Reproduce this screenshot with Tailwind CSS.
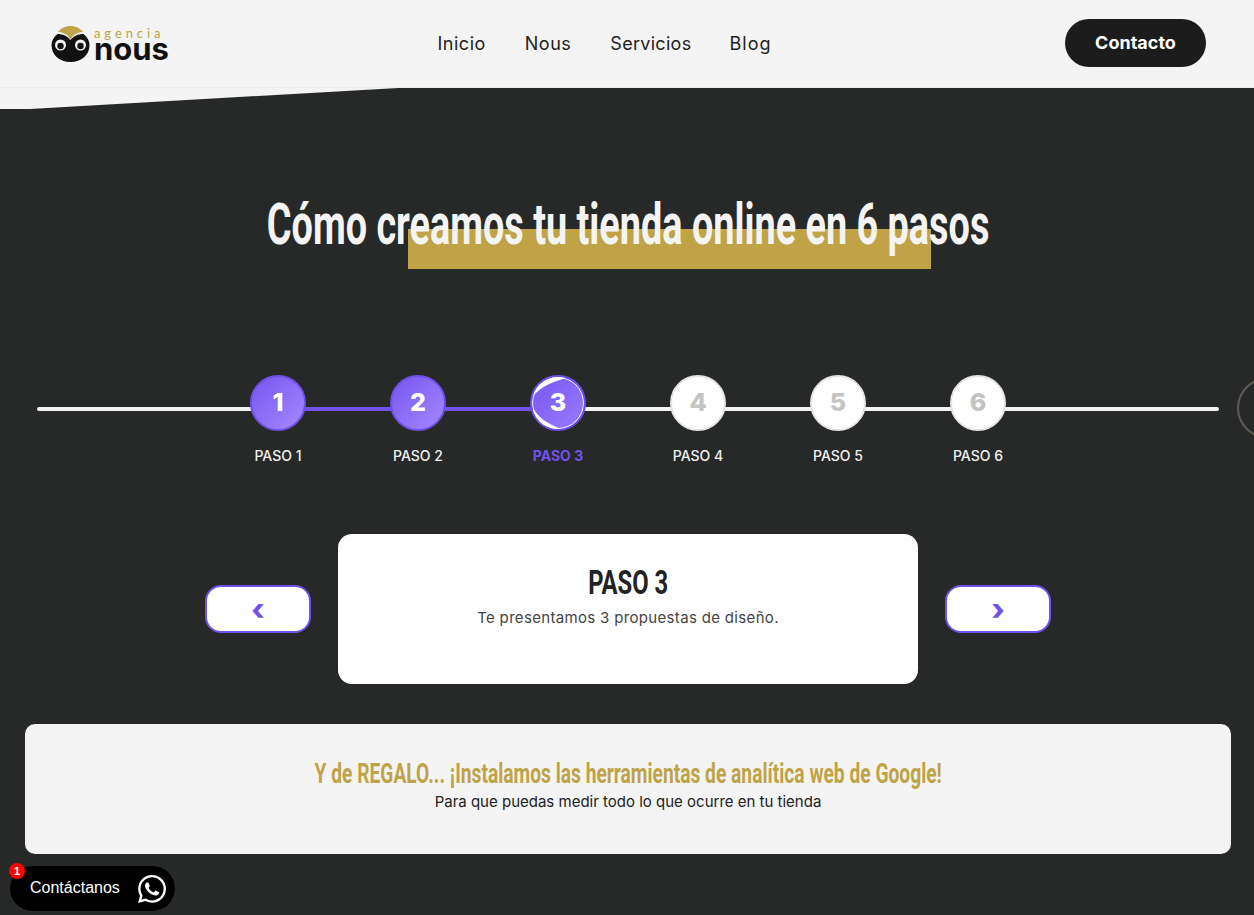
<!DOCTYPE html>
<html lang="es">
<head>
  <meta charset="UTF-8">
  <title>Agencia Nous - Tienda online</title>
  <script src="https://cdn.jsdelivr.net/npm/@tailwindcss/browser@4"></script>
</head>
<body class="bg-[#272928] h-[915px] overflow-hidden relative font-['Inter',sans-serif]">
  <!-- cabecera -->
  <header class="h-[88px] bg-[#f4f4f4] border-b border-[#ececec] flex items-center justify-between pl-[51px] pr-[48px]">
    <a class="flex items-center gap-[4px] w-[117px]">
      <svg class="shrink-0" width="39" height="36" viewBox="0 0 39 36">
        <path d="M7 6C10 2 15 0 19.500 0S29 2 32 6c-5 0-9 2-12.500 7C16 8 12 6 7 6z" fill="#bfa346"/>
        <path d="M19.500 14c3-4 8-6 13-6 4 3 6 7 6 11 0 10-8 17-19 17S.500 29 .500 19c0-4 2-8 6-11 5 0 10 2 13 6z" fill="#111"/>
        <circle cx="9.500" cy="19" r="5.500" fill="#f4f4f4"/><circle cx="29.500" cy="19" r="5.500" fill="#f4f4f4"/>
        <circle cx="9.500" cy="20" r="3.200" fill="#111"/><circle cx="29.500" cy="20" r="3.200" fill="#111"/>
      </svg>
      <div class="flex flex-col items-start">
        <span class="text-[13px] leading-[11px] text-[#bfa346] tracking-[3.9px] font-['Lato',sans-serif]">agencia</span>
        <span class="text-[31px] leading-[20px] font-bold text-[#111] font-['Inter',sans-serif]">nous</span>
      </div>
    </a>
    <nav class="flex items-center gap-[39px] text-[18px] text-[#222] tracking-[.5px] ml-[-24px]">
      <a>Inicio</a><a>Nous</a><a class="tracking-[.3px]">Servicios</a><a class="tracking-[1px] ml-[-1px]">Blog</a>
    </nav>
    <a class="w-[141px] h-[48px] mb-[2px] rounded-full bg-[#1c1c1c] text-white font-bold text-[18px] flex items-center justify-center">Contacto</a>
  </header>
  <!-- cuña clara bajo la cabecera -->
  <svg class="absolute left-0 top-[88px]" width="400" height="21"><polygon points="0,0 398,0 30,21 0,21" fill="#f4f4f4"/></svg>

  <main class="w-[1256px]">
    <h1 class="mt-[103px] h-[80px] flex justify-center relative">
      <span class="absolute top-[38px] left-[408px] w-[523px] h-[40px] bg-[#bfa346]"></span>
      <span class="relative inline-block whitespace-nowrap text-[58px] leading-[66px] font-bold text-[#f4f4f4] scale-x-[.652] font-['Roboto',sans-serif]">Cómo creamos tu tienda online en 6 pasos</span>
    </h1>

    <!-- pasos -->
    <section class="relative mt-[104px] mx-[37px] w-[1182px]">
      <div class="absolute left-0 right-0 top-[32px] h-[4px] rounded-sm bg-[#f1f1f1]"></div>
      <div class="absolute left-[241px] top-[32px] h-[4px] w-[280px] bg-[#7351ec]"></div>
      <ol class="relative flex justify-center">
        <li class="w-[140px] flex flex-col items-center">
          <div class="w-[56px] h-[56px] rounded-full border-2 border-[#6f4fe8] bg-linear-to-br from-[#7655f0] to-[#a588ff] text-white font-extrabold text-[25px] flex items-center justify-center">1</div>
          <span class="mt-[14px] text-[14px] leading-[22px] font-medium text-[#f1f1f1]">PASO 1</span>
        </li>
        <li class="w-[140px] flex flex-col items-center">
          <div class="w-[56px] h-[56px] rounded-full border-2 border-[#6f4fe8] bg-linear-to-br from-[#7655f0] to-[#a588ff] text-white font-extrabold text-[25px] flex items-center justify-center">2</div>
          <span class="mt-[14px] text-[14px] leading-[22px] font-medium text-[#f1f1f1]">PASO 2</span>
        </li>
        <li class="w-[140px] flex flex-col items-center">
          <div class="relative w-[56px] h-[56px] rounded-full border-2 border-[#6f4fe8] bg-linear-to-br from-[#7655f0] to-[#9a7cff] text-white font-extrabold text-[25px] flex items-center justify-center">
            <svg class="absolute left-0 top-0 rounded-full" width="52" height="52" viewBox="2 2 52 52"><path d="M3 21C9 14 18 8 36 3L30 -2 5 5zM3 33C8 42 16 48 31 54L25 60 3 50z" fill="#fff"/><circle cx="28" cy="28" r="25.500" fill="none" stroke="#fff" stroke-width="1"/></svg>
            <span class="relative">3</span>
          </div>
          <span class="mt-[14px] text-[14px] leading-[22px] font-bold text-[#7351ec]">PASO 3</span>
        </li>
        <li class="w-[140px] flex flex-col items-center">
          <div class="w-[56px] h-[56px] rounded-full border-2 border-[#e4e4e4] bg-white text-[#c4c4c4] font-extrabold text-[25px] flex items-center justify-center">4</div>
          <span class="mt-[14px] text-[14px] leading-[22px] font-medium text-[#f1f1f1]">PASO 4</span>
        </li>
        <li class="w-[140px] flex flex-col items-center">
          <div class="w-[56px] h-[56px] rounded-full border-2 border-[#e4e4e4] bg-white text-[#c4c4c4] font-extrabold text-[25px] flex items-center justify-center">5</div>
          <span class="mt-[14px] text-[14px] leading-[22px] font-medium text-[#f1f1f1]">PASO 5</span>
        </li>
        <li class="w-[140px] flex flex-col items-center">
          <div class="w-[56px] h-[56px] rounded-full border-2 border-[#e4e4e4] bg-white text-[#c4c4c4] font-extrabold text-[25px] flex items-center justify-center">6</div>
          <span class="mt-[14px] text-[14px] leading-[22px] font-medium text-[#f1f1f1]">PASO 6</span>
        </li>
      </ol>
    </section>

    <!-- detalle del paso -->
    <section class="mt-[67px] flex items-center justify-center gap-[27px]">
      <button class="w-[106px] h-[48px] rounded-[16px] border-2 border-[#7351ec] bg-white text-[#7351ec] font-extrabold text-[30px] leading-none pb-[1px]">‹</button>
      <div class="w-[580px] h-[150px] rounded-[14px] bg-white flex flex-col items-center pt-[28px]">
        <h2 class="text-[34px] leading-[40px] font-bold text-[#222] scale-x-[.7] font-['Roboto',sans-serif]">PASO 3</h2>
        <p class="mt-[5px] text-[15px] leading-[22px] text-[#444] tracking-[.33px]">Te presentamos 3 propuestas de diseño.</p>
      </div>
      <button class="w-[106px] h-[48px] rounded-[16px] border-2 border-[#7351ec] bg-white text-[#7351ec] font-extrabold text-[30px] leading-none pb-[1px]">›</button>
    </section>

    <section class="mt-[40px] ml-[25px] w-[1206px] h-[130px] rounded-[10px] bg-[#f4f4f4] flex flex-col items-center pt-[32px]">
      <h3 class="whitespace-nowrap text-[28px] leading-[35px] font-bold text-[#bfa346] scale-x-[.686] font-['Roboto',sans-serif]">Y de REGALO... ¡Instalamos las herramientas de analítica web de Google!</h3>
      <p class="text-[15px] leading-[22px] text-[#222]">Para que puedas medir todo lo que ocurre en tu tienda</p>
    </section>
  </main>

  <!-- círculo recortado en el borde derecho -->
  <div class="absolute left-[1237px] top-[378px] w-[60px] h-[60px] rounded-full border-2 border-[#5c5c54]"></div>

  <!-- widget whatsapp -->
  <a class="absolute left-[10px] top-[866px] w-[165px] h-[45px] rounded-full bg-black text-white flex items-center justify-between pl-[20px] pr-[9px] text-[16px] font-['Liberation_Sans',sans-serif]">
    <span class="mb-[2px]">Contáctanos</span>
    <svg width="28" height="28" viewBox="0 0 24 24" fill="#fff"><path d="M17.472 14.382c-.297-.149-1.758-.867-2.03-.967-.273-.099-.471-.148-.67.15-.197.297-.767.966-.94 1.164-.173.199-.347.223-.644.075-.297-.15-1.255-.463-2.39-1.475-.883-.788-1.48-1.761-1.653-2.059-.173-.297-.018-.458.13-.606.134-.133.298-.347.446-.52.149-.174.198-.298.298-.497.099-.198.05-.371-.025-.52-.075-.149-.669-1.612-.916-2.207-.242-.579-.487-.5-.669-.51-.173-.008-.371-.01-.57-.01-.198 0-.52.074-.792.372-.272.297-1.04 1.016-1.04 2.479 0 1.462 1.065 2.875 1.213 3.074.149.198 2.096 3.2 5.077 4.487.709.306 1.262.489 1.694.625.712.227 1.36.195 1.871.118.571-.085 1.758-.719 2.006-1.413.248-.694.248-1.289.173-1.413-.074-.124-.272-.198-.57-.347m-5.421 7.403h-.004a9.87 9.87 0 01-5.031-1.378l-.361-.214-3.741.982.998-3.648-.235-.374a9.86 9.86 0 01-1.51-5.26c.001-5.45 4.436-9.884 9.888-9.884 2.64 0 5.122 1.03 6.988 2.898a9.825 9.825 0 012.893 6.994c-.003 5.45-4.437 9.884-9.885 9.884m8.413-18.297A11.815 11.815 0 0012.05 0C5.495 0 .16 5.335.157 11.892c0 2.096.547 4.142 1.588 5.945L.057 24l6.305-1.654a11.882 11.882 0 005.683 1.448h.005c6.554 0 11.89-5.335 11.893-11.893a11.821 11.821 0 00-3.48-8.413z"/></svg>
    <span class="absolute left-[-1px] top-[-3px] w-[16px] h-[16px] rounded-full bg-[#f00] text-white text-[11px] font-bold flex items-center justify-center">1</span>
  </a>
</body>
</html>
